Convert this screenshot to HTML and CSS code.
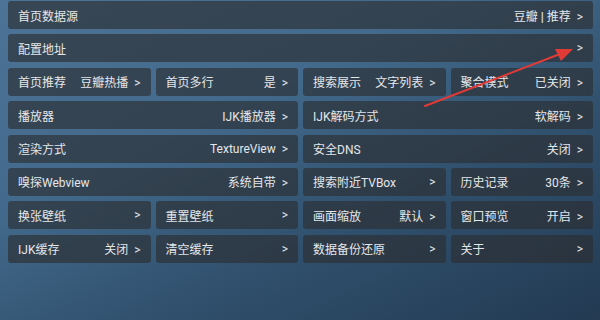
FILE: index.html
```html
<!DOCTYPE html>
<html lang="zh-CN">
<head>
    <meta charset="UTF-8">
    <title>设置</title>
    <link rel="stylesheet" href="styles.css">
</head>
<body>
    <div class="settings">
        <div class="item span-4"><span class="name">首页数据源</span><span class="value">豆瓣 <b>|</b> 推荐<i>&gt;</i></span></div>
        <div class="item span-4"><span class="name">配置地址</span><span class="value"><i>&gt;</i></span></div>

        <div class="item"><span class="name">首页推荐</span><span class="value">豆瓣热播<i>&gt;</i></span></div>
        <div class="item"><span class="name">首页多行</span><span class="value">是<i>&gt;</i></span></div>
        <div class="item"><span class="name">搜索展示</span><span class="value">文字列表<i>&gt;</i></span></div>
        <div class="item"><span class="name">聚合模式</span><span class="value">已关闭<i>&gt;</i></span></div>

        <div class="item span-2"><span class="name">播放器</span><span class="value">IJK播放器<i>&gt;</i></span></div>
        <div class="item span-2"><span class="name">IJK解码方式</span><span class="value">软解码<i>&gt;</i></span></div>

        <div class="item span-2"><span class="name">渲染方式</span><span class="value">TextureView<i>&gt;</i></span></div>
        <div class="item span-2"><span class="name">安全DNS</span><span class="value">关闭<i>&gt;</i></span></div>

        <div class="item span-2"><span class="name">嗅探Webview</span><span class="value">系统自带<i>&gt;</i></span></div>
        <div class="item"><span class="name">搜索附近TVBox</span><span class="value"><i>&gt;</i></span></div>
        <div class="item"><span class="name">历史记录</span><span class="value">30条<i>&gt;</i></span></div>

        <div class="item"><span class="name">换张壁纸</span><span class="value"><i>&gt;</i></span></div>
        <div class="item"><span class="name">重置壁纸</span><span class="value"><i>&gt;</i></span></div>
        <div class="item"><span class="name">画面缩放</span><span class="value">默认<i>&gt;</i></span></div>
        <div class="item"><span class="name">窗口预览</span><span class="value">开启<i>&gt;</i></span></div>

        <div class="item"><span class="name">IJK缓存</span><span class="value">关闭<i>&gt;</i></span></div>
        <div class="item"><span class="name">清空缓存</span><span class="value"><i>&gt;</i></span></div>
        <div class="item"><span class="name">数据备份还原</span><span class="value"><i>&gt;</i></span></div>
        <div class="item"><span class="name">关于</span><span class="value"><i>&gt;</i></span></div>
    </div>

    <!-- 标注箭头 -->
    <svg class="mark" width="600" height="320" viewBox="0 0 600 320">
        <line x1="425" y1="106" x2="560" y2="54" stroke="#e23a36" stroke-width="2" stroke-linecap="round"/>
        <polygon points="573,49 555,49 561,61" fill="#e23a36"/>
    </svg>
</body>
</html>
```

FILE: styles.css
```css
html, body {
    height: 100%;
}

body {
    margin: 0;
    font-family: Roboto, "Noto Sans CJK SC", sans-serif;
    background: linear-gradient(155deg, #4d7396 0%, #436a8c 35%, #30506d 65%, #233a52 100%);
    color: #e4e7ea;
    overflow: hidden;
}

.settings {
    display: grid;
    grid-template-columns: repeat(4, 1fr);
    grid-auto-rows: 28px;
    column-gap: 5px;
    row-gap: 5.4px;
    padding: 1px 7px 0 8px;
}

.item {
    display: flex;
    align-items: center;
    justify-content: space-between;
    padding: 0 10px;
    background: rgba(44, 45, 48, 0.64);
    border-radius: 3px;
    font-size: 12px;
    white-space: nowrap;
}

.span-2 {
    grid-column: span 2;
}

.span-4 {
    grid-column: span 4;
}

.value b {
    font-weight: bold;
}

.value i {
    font-style: normal;
    margin-left: 6px;
}

.mark {
    position: absolute;
    top: 0;
    left: 0;
    pointer-events: none;
}
```
